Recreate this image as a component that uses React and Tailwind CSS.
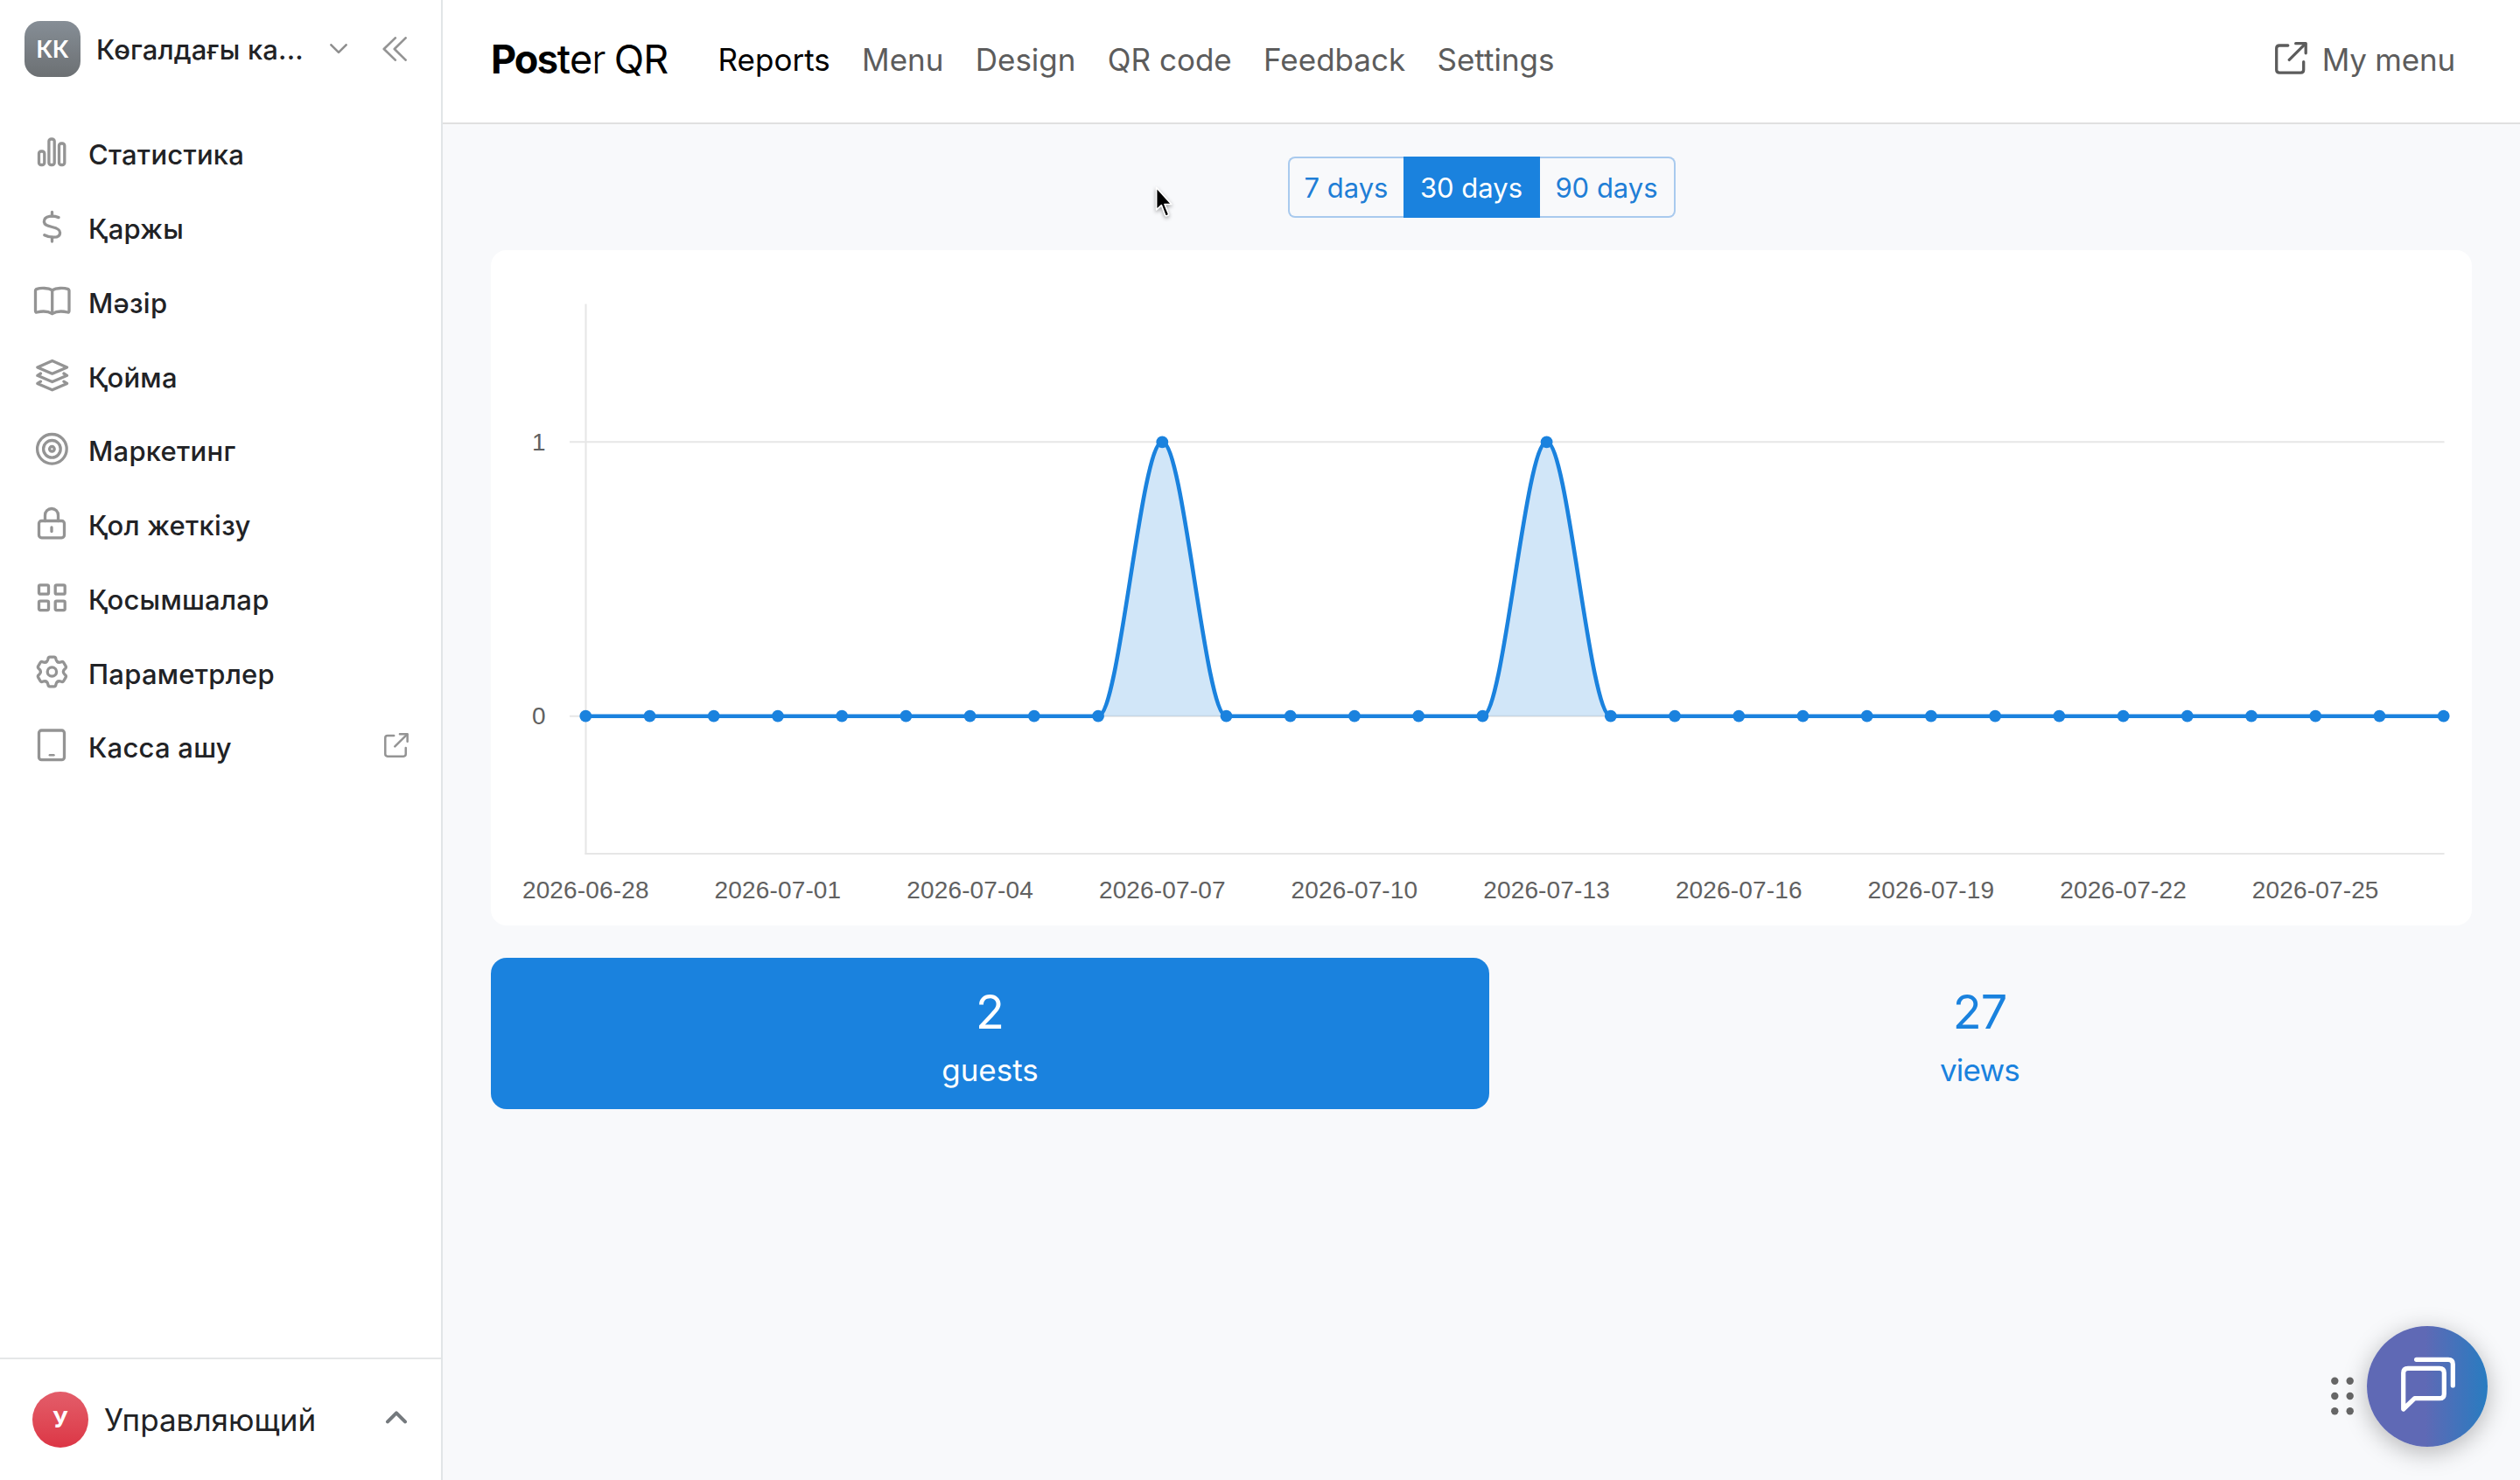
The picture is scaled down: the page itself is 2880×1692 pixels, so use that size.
import React, { useState } from "react";

const StatsIcon = () => (
  <>
    <rect x="9.5" y="23" width="6.3" height="15.5" rx="2.6" />
    <rect x="20.9" y="9" width="6.3" height="29.5" rx="2.6" />
    <rect x="32.5" y="14" width="6.3" height="24.5" rx="2.6" />
  </>
);

const DollarIcon = () => (
  <>
    <path d="M24.5 7.5V12M24.5 36.5V41" />
    <path d="M32 13.6C28.5 12.4 24.5 12 21.5 12.4C17.5 13 15.4 15.4 15.4 18.3C15.4 21.7 18.2 23.1 24.5 24.5C30.8 25.9 33.6 27.4 33.6 30.9C33.6 34.2 31 36.2 26.5 36.2C22.5 36.2 18.5 35.2 15.8 33.7" />
  </>
);

const BookIcon = () => (
  <>
    <path d="M24.7 11.7C20 9 11.5 9 7.2 10.4C6 10.8 5.5 11.4 5.5 12.6V35.6C5.5 36.8 6.2 37.3 7.3 37C12.5 35.7 20 35.7 24.7 38.6C29.4 35.7 37 35.7 42.2 37C43.3 37.3 44 36.8 44 35.6V12.6C44 11.4 43.5 10.8 42.3 10.4C38 9 29.4 9 24.7 11.7Z" />
    <path d="M24.7 11.7V38.6" />
  </>
);

const LayersIcon = () => (
  <>
    <path d="M24.7 7.5L41.6 14.9L24.7 22.2L7.8 14.9Z" />
    <path d="M11.5 22L7.8 24.3L24.7 31.6L41.6 24.3L37.9 22" />
    <path d="M11.5 31.2L7.8 33.5L24.7 40.8L41.6 33.5L37.9 31.2" />
  </>
);

const TargetIcon = () => (
  <>
    <circle cx="24.4" cy="24.3" r="16.8" />
    <circle cx="24.4" cy="24.3" r="9.8" />
    <circle cx="24.4" cy="24.3" r="2.8" />
  </>
);

const LockIcon = () => (
  <>
    <rect x="9.5" y="21.5" width="29" height="19.3" rx="3" />
    <path d="M16.5 21.5V15.2C16.5 10.8 19.7 7.5 24 7.5C28.3 7.5 31.5 10.8 31.5 15.2V21.5" />
    <path d="M24 29V33.6" />
  </>
);

const GridIcon = () => (
  <>
    <rect x="9.5" y="9.8" width="11" height="10.4" rx="1.5" />
    <rect x="28.2" y="9.8" width="11" height="10.4" rx="1.5" />
    <rect x="9.5" y="28.2" width="11" height="10.4" rx="1.5" />
    <rect x="28.2" y="28.2" width="11" height="10.4" rx="1.5" />
  </>
);

const GearIcon = () => (
  <g transform="translate(24.4 24)">
    {[0, 60, 120, 180, 240, 300].map((angle) => (
      <path
        key={angle}
        transform={`rotate(${angle})`}
        d="M-6.5 -11.26C-5.2 -12 -4.8 -12.8 -4.6 -14.2C-4.4 -16 -3.8 -16.8 -2.4 -16.8H2.4C3.8 -16.8 4.4 -16 4.6 -14.2C4.8 -12.8 5.2 -12 6.5 -11.26"
      />
    ))}
    <circle r="5.2" />
  </g>
);

const TabletIcon = () => (
  <>
    <rect x="9.5" y="7" width="29" height="33.7" rx="3" />
    <path d="M21.8 35.3H26.5" strokeWidth="2.4" />
  </>
);

const ExternalIcon = ({ className }) => (
  <svg
    viewBox="0 0 37 37"
    fill="none"
    stroke="currentColor"
    strokeWidth="3.3"
    strokeLinecap="round"
    strokeLinejoin="round"
    className={className}
  >
    <path d="M14.8 4H5.2C3 4 1.7 5.2 1.7 7.2V31.8C1.7 34 3 35.2 5.2 35.2H29.4C31.5 35.2 32.7 34 32.7 31.8V22.6" />
    <path d="M16.3 20.4L34.6 2.2" />
    <path d="M23.7 1.7H35.2V12.8" />
  </svg>
);

const menuItems = [
  { label: "Статистика", Icon: StatsIcon },
  { label: "Қаржы", Icon: DollarIcon },
  { label: "Мәзір", Icon: BookIcon },
  { label: "Қойма", Icon: LayersIcon },
  { label: "Маркетинг", Icon: TargetIcon },
  { label: "Қол жеткізу", Icon: LockIcon },
  { label: "Қосымшалар", Icon: GridIcon },
  { label: "Параметрлер", Icon: GearIcon },
  { label: "Касса ашу", Icon: TabletIcon, external: true },
];

const tabs = ["Reports", "Menu", "Design", "QR code", "Feedback", "Settings"];

const ranges = [
  { label: "7 days", shape: "w-[132px] rounded-l-lg border-l-2" },
  { label: "30 days", shape: "w-[156px]" },
  { label: "90 days", shape: "w-[155px] rounded-r-lg border-r-2" },
];

// guests per day, 2026-06-28 .. 2026-07-27
const guests = [
  0, 0, 0, 0, 0, 0, 0, 0, 0, 1, 0, 0, 0, 0, 0, 1, 0, 0, 0, 0, 0, 0, 0, 0, 0, 0,
  0, 0, 0, 0,
];

const dateLabels = [
  "2026-06-28",
  "2026-07-01",
  "2026-07-04",
  "2026-07-07",
  "2026-07-10",
  "2026-07-13",
  "2026-07-16",
  "2026-07-19",
  "2026-07-22",
  "2026-07-25",
];

function Sidebar() {
  return (
    <aside className="flex w-[506px] shrink-0 flex-col border-r-2 border-[#e1e5e7] bg-white">
      <div className="flex h-[112px] items-center pl-7">
        <div className="flex size-16 shrink-0 items-center justify-center rounded-[18px] bg-linear-to-b from-[#868e96] to-[#6c7073] text-[27px] font-semibold leading-none tracking-[-0.5px] text-white">
          КК
        </div>
        <span className="ml-[18px] w-[267px] whitespace-nowrap pt-px text-[31px] font-medium leading-10 tracking-[0.15px] text-[#212225]">
          Көгалдағы ка...
        </span>
        <svg
          viewBox="0 0 20 12"
          fill="none"
          stroke="#8f8f8f"
          strokeWidth="2.6"
          strokeLinecap="round"
          strokeLinejoin="round"
          className="h-3 w-5"
        >
          <path d="M1.4 1.3L10 9.9L18.6 1.3" />
        </svg>
        <svg
          viewBox="0 0 28 28"
          fill="none"
          stroke="#949494"
          strokeWidth="2.7"
          strokeLinecap="round"
          strokeLinejoin="round"
          className="ml-10 size-7"
        >
          <path d="M14.8 1.4L1.8 14L14.8 26.6" />
          <path d="M26.6 1.4L13.8 14L26.6 26.6" />
        </svg>
      </div>

      <nav className="pt-5">
        {menuItems.map(({ label, Icon, external }) => (
          <a key={label} className="flex h-[84.75px] items-center pl-[35px]">
            <svg
              viewBox="0 0 48 48"
              fill="none"
              stroke="#949494"
              strokeWidth="3.3"
              strokeLinecap="round"
              strokeLinejoin="round"
              className="size-12 shrink-0"
            >
              <Icon />
            </svg>
            <span className="ml-[18px] flex-1 pt-1.5 text-[31px] font-medium leading-10 tracking-[0.25px] text-[#212225]">
              {label}
            </span>
            {external && (
              <ExternalIcon className="mr-[37px] size-7 text-[#949494]" />
            )}
          </a>
        ))}
      </nav>

      <div className="mt-auto flex h-[140px] items-center border-t-2 border-[#e5e7e8] pl-[37px]">
        <div className="flex size-16 shrink-0 items-center justify-center rounded-full bg-linear-to-b from-[#e35d6a] to-[#dc3545] text-[26px] font-bold leading-none text-white">
          У
        </div>
        <span className="ml-[18px] w-[321px] text-[35px] leading-[44px] text-[#212225]">
          Управляющий
        </span>
        <svg
          viewBox="0 0 26 16"
          fill="none"
          stroke="#74797d"
          strokeWidth="4"
          strokeLinecap="round"
          strokeLinejoin="round"
          className="mb-1.5 h-4 w-[26px]"
        >
          <path d="M3 13.4L13 3.3L23 13.4" />
        </svg>
      </div>
    </aside>
  );
}

function Header() {
  return (
    <header className="flex h-[142px] items-center border-b-2 border-[#e0e0e0] bg-white pb-1 pl-[55px] pr-[74px] text-[35px] leading-[44px] text-[#5c5c5c]">
      <div className="w-[259.6px] shrink-0 whitespace-pre text-[45px] leading-[54px] text-black">
        <span className="font-bold tracking-[-2px]">Po</span>
        <span className="font-semibold tracking-[-1.4px]">s</span>
        <span className="font-medium tracking-[-1px]">t</span>
        <span className="tracking-[-1px]">e</span>
        <span className="font-light tracking-[-1.7px]">r </span>
        <span className="tracking-[-0.9px]">QR</span>
      </div>
      <nav className="flex gap-[36.3px]">
        {tabs.map((tab) => (
          <a key={tab} className={tab === "Reports" ? "text-black" : ""}>
            {tab}
          </a>
        ))}
      </nav>
      <a className="ml-auto flex items-center gap-[17px]">
        <ExternalIcon className="mt-[-3px] size-[37px]" />
        <span className="tracking-[-0.2px]">My menu</span>
      </a>
    </header>
  );
}

function Chart() {
  const left = 108.3;
  const step = 73.22;
  const zero = 532.7;
  const one = 219.3;
  const points = guests.map((value, i) => [
    left + i * step,
    zero - value * (zero - one),
  ]);

  const line = points
    .map(([x, y], i) => {
      if (i === 0) return `M${x} ${y}`;
      const [px, py] = points[i - 1];
      return `C${px + step / 3} ${py} ${x - step / 3} ${y} ${x} ${y}`;
    })
    .join("");

  return (
    <svg viewBox="0 0 2264 772" className="block h-[772px] w-[2264px]">
      <g stroke="#e6e6e6" strokeWidth="2">
        <path d="M90 219.3H2232.5" />
        <path d="M90 532.7H2232.5" />
        <path d="M108.5 61.5V691" />
        <path d="M107.5 690H2232.5" />
      </g>
      <path
        d={`${line}L${points[29][0]} ${zero}L${left} ${zero}Z`}
        fill="#1a82de"
        fillOpacity="0.2"
      />
      <path d={line} fill="none" stroke="#1a82de" strokeWidth="4.6" />
      {points.map(([x, y]) => (
        <circle key={x} cx={x} cy={y} r="6.9" fill="#1a82de" />
      ))}
      <g
        fill="#616161"
        fontSize="28"
        className="font-['Liberation_Sans',Arial,sans-serif]"
      >
        <text x="62.5" y="228.5" textAnchor="end">
          1
        </text>
        <text x="62.5" y="542" textAnchor="end">
          0
        </text>
        {dateLabels.map((date, i) => (
          <text
            key={date}
            x={left + i * 3 * step}
            y="741"
            textAnchor="middle"
            letterSpacing="0.15"
          >
            {date}
          </text>
        ))}
      </g>
    </svg>
  );
}

function ChatWidget() {
  return (
    <div className="absolute bottom-[38px] right-[37px] flex items-center gap-[15px]">
      <svg viewBox="0 0 26 44" fill="#666666" className="mt-[22px] h-11 w-[26px]">
        {[4.7, 22, 39.3].map((y) => (
          <g key={y}>
            <circle cx="4.3" cy={y} r="4.2" />
            <circle cx="21.7" cy={y} r="4.2" />
          </g>
        ))}
      </svg>
      <button className="size-[138px] rounded-full bg-linear-[90deg,#5f69b5_48%,#2a7bc0_98%] shadow-[0_6px_28px_rgba(0,0,0,0.28)]">
        <svg
          viewBox="0 0 138 138"
          fill="none"
          stroke="white"
          strokeWidth="5.2"
          strokeLinecap="round"
          strokeLinejoin="round"
          className="size-[138px]"
        >
          <path d="M41.7 95V53.5C41.7 50 43.5 48.3 47 48.3H83C86.5 48.3 88.3 50 88.3 53.5V77.4C88.3 81 86.5 82.7 83 82.7H54.6Z" />
          <path d="M56.6 38.3H93C96.5 38.3 98.3 40 98.3 43.5V68" />
        </svg>
      </button>
    </div>
  );
}

export default function App() {
  const [range, setRange] = useState("30 days");

  return (
    <div className="relative flex h-[1692px] w-[2880px] overflow-hidden bg-[#f8f9fb] font-[Inter,'Open_Sans',sans-serif]">
      <Sidebar />

      <div className="flex-1">
        <Header />
        <main className="px-[55px] pt-[37px]">
          {/* Period switch */}
          <div className="mx-auto flex h-[70px] w-[443px] text-[31px] leading-10">
            {ranges.map(({ label, shape }) => (
              <button
                key={label}
                onClick={() => setRange(label)}
                className={`${shape} h-full border-y-2 pt-0.5 ${
                  label === range
                    ? "border-[#1a82de] bg-[#1a82de] text-white"
                    : "border-[#a9caee] text-[#1f7ed6]"
                }`}
              >
                {label}
              </button>
            ))}
          </div>

          <section className="mt-[37px] rounded-[18px] bg-white">
            <Chart />
          </section>

          {/* Totals */}
          <section className="mt-[37px] flex text-center">
            <div className="h-[173px] w-[1141px] rounded-[18px] bg-[#1a82de] pt-7 text-white">
              <div className="text-[54px] leading-[67px]">2</div>
              <div className="text-[35px] leading-[66px]">guests</div>
            </div>
            <div className="h-[173px] w-[1121px] rounded-[18px] pt-7 text-[#1a82de]">
              <div className="text-[54px] leading-[67px] tracking-[-0.9px]">27</div>
              <div className="text-[35px] leading-[66px] tracking-[-0.8px]">views</div>
            </div>
          </section>
        </main>
      </div>

      <ChatWidget />

      {/* Mouse pointer */}
      <svg
        viewBox="0 0 24 38"
        className="absolute left-[1319px] top-[211px] h-10 w-[25px] drop-shadow-[0_2px_2px_rgba(0,0,0,0.35)]"
      >
        <path
          d="M2.5 3V27.6L8 22.4L12.2 33.6C12.7 34.9 16.4 33.6 15.9 32.2L11.5 21.4H19Z"
          fill="black"
          stroke="white"
          strokeWidth="1.6"
          strokeLinejoin="round"
        />
      </svg>
    </div>
  );
}
